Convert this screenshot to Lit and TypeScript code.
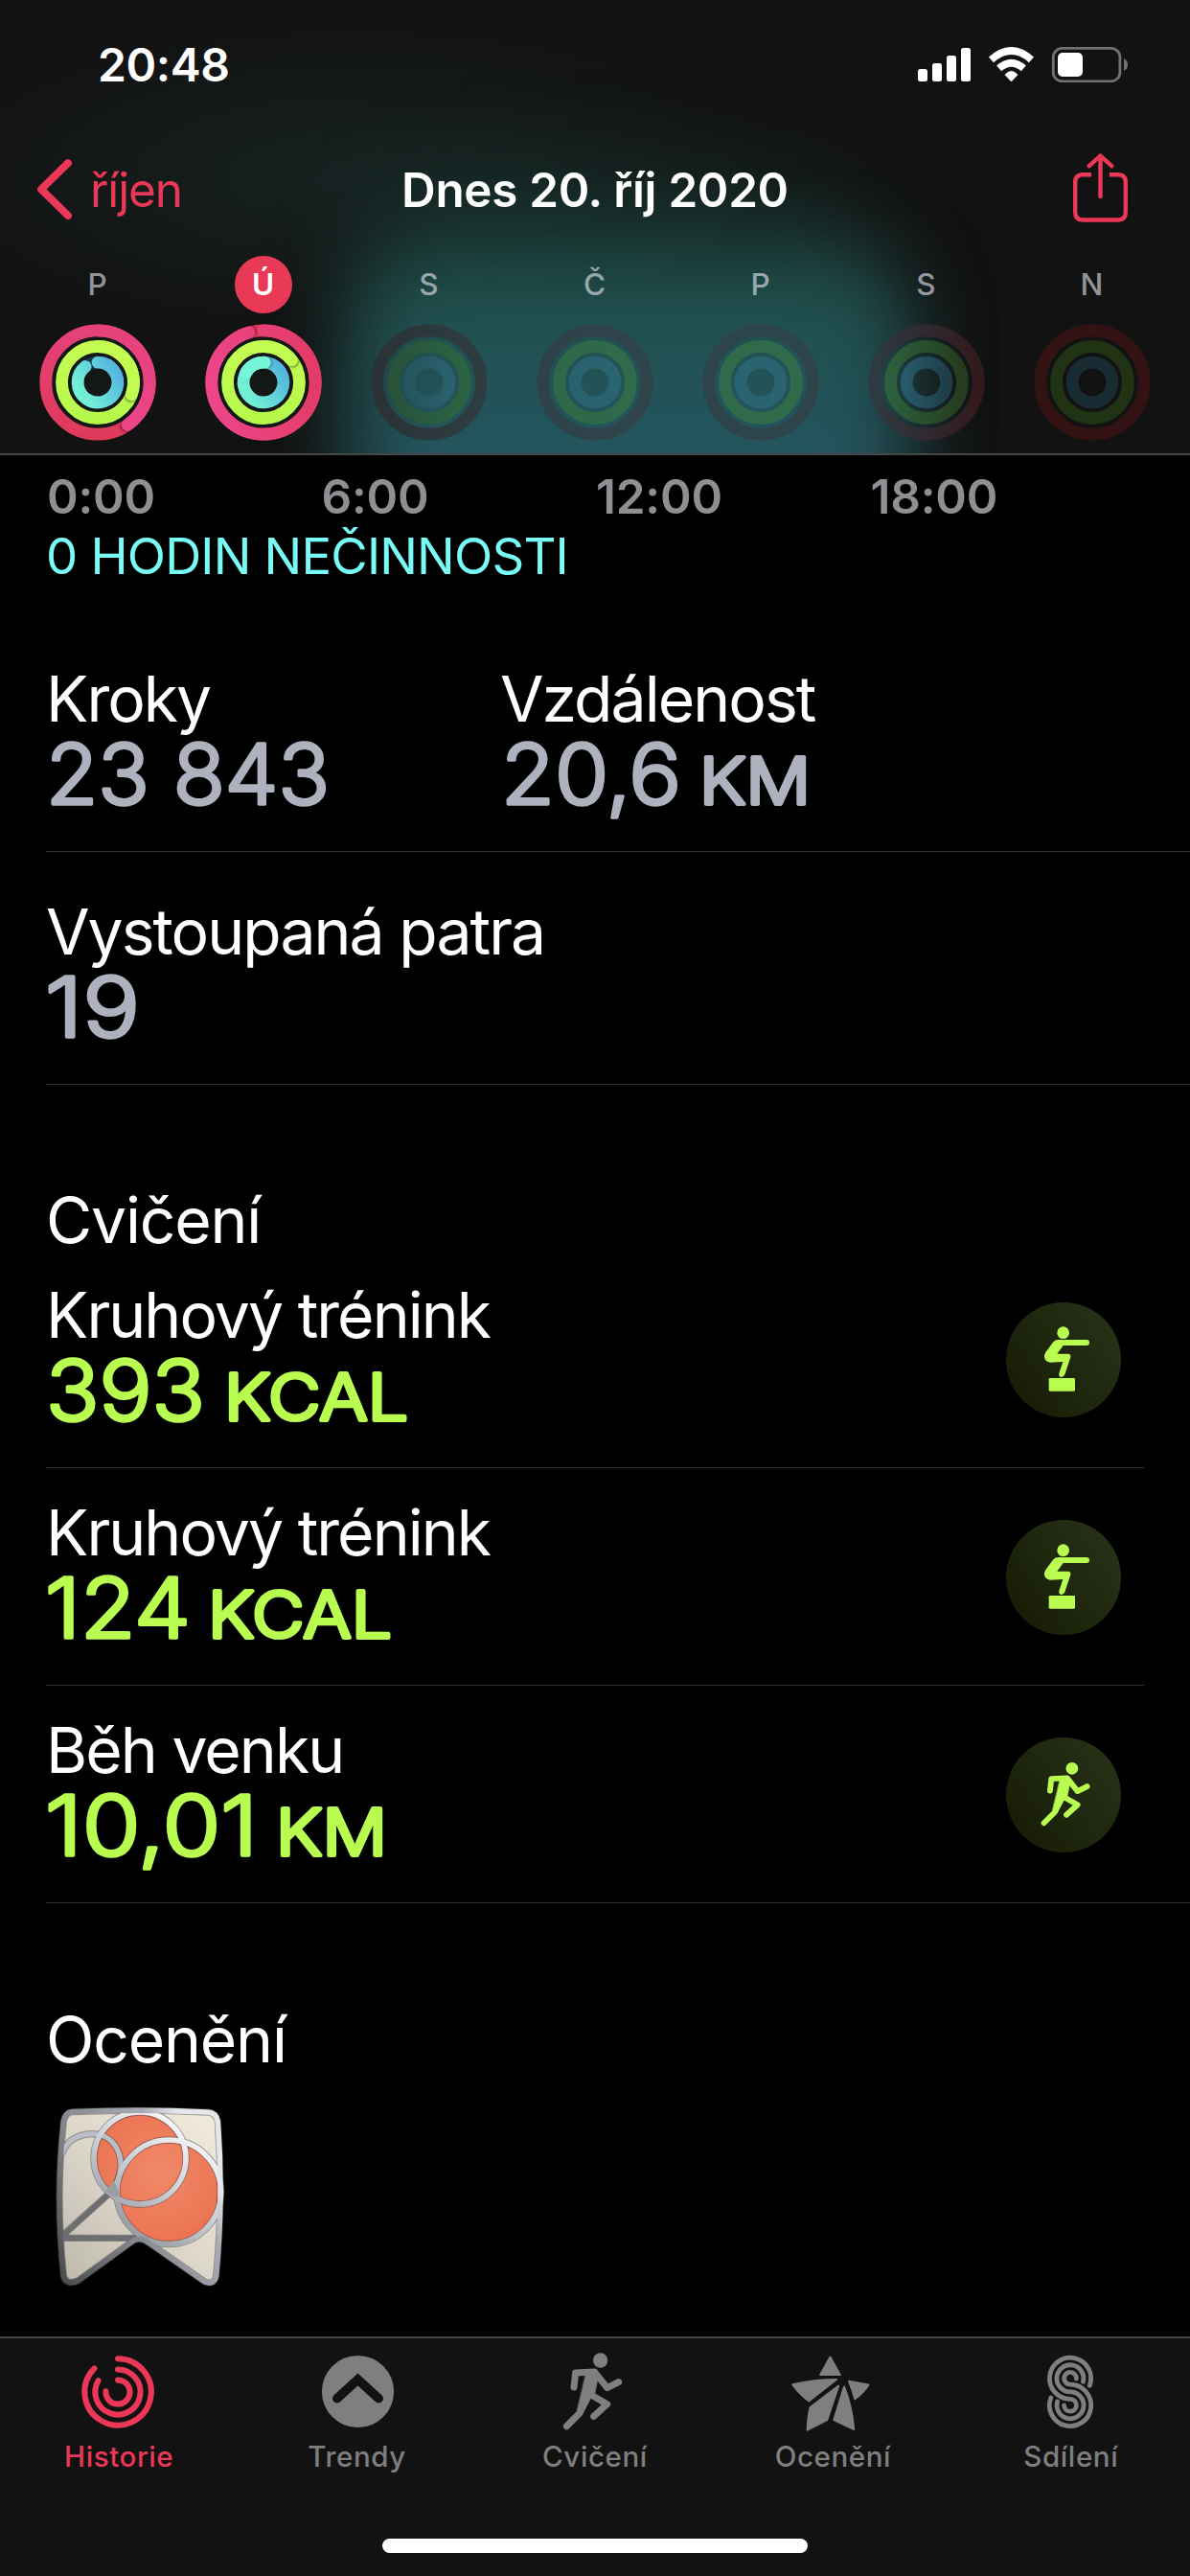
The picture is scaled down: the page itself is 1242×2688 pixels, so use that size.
import { LitElement, html, svg, css, nothing } from "lit";
import { customElement, property } from "lit/decorators.js";

type Part = { text: string; x: number; length: number; unit?: boolean };
type Lap = { start: number; end: number };
type Day = {
  letter: string;
  selected?: boolean;
  laps?: { move: number; exercise: number; stand: number };
  tracks?: [string, string][];
};

const WEEK: Day[] = [
  { letter: "P", laps: { move: 145, exercise: 110, stand: 322 } },
  { letter: "Ú", selected: true, laps: { move: 344, exercise: 52, stand: 364 } },
  { letter: "S", tracks: [["#2a3336", "#2e3d42"], ["#28533a", "#2c6343"], ["#26555f", "#29616e"]] },
  { letter: "Č", tracks: [["#2e4349", "#2e444b"], ["#2e6849", "#2f6a4a"], ["#29626e", "#2a6470"]] },
  { letter: "P", tracks: [["#2e444b", "#2e444b"], ["#2f6a4b", "#2f6a4b"], ["#2a6470", "#2a6470"]] },
  { letter: "S", tracks: [["#2d3a41", "#321a1d"], ["#2c5f3e", "#243c1d"], ["#27596a", "#1e3e48"]] },
  { letter: "N", tracks: [["#331214", "#331214"], ["#203314", "#203314"], ["#192c34", "#192c34"]] },
];

const RADII = { move: 54.2, exercise: 37.5, stand: 20.9 };

function point(r: number, deg: number): [number, number] {
  const a = (deg * Math.PI) / 180;
  return [61 + r * Math.sin(a), 61 - r * Math.cos(a)];
}

function arc(r: number, { start, end }: Lap): string {
  const [x0, y0] = point(r, start);
  const [x1, y1] = point(r, end);
  return `M${x0} ${y0}A${r} ${r} 0 ${end - start > 180 ? 1 : 0} 1 ${x1} ${y1}`;
}

@customElement("activity-rings")
class ActivityRings extends LitElement {
  @property({ attribute: false }) day!: Day;

  static styles = css`
    :host { display: block; width: 122px; height: 122px; }
    svg { display: block; overflow: visible; }
    .arc { fill: none; stroke-width: 12.8; stroke-linecap: round; }
    .shade { fill: #000; opacity: 0.55; filter: blur(1.4px); }
  `;

  private cap(r: number, deg: number) {
    const [x, y] = point(r, deg + 90 / r);
    return svg`<circle class="shade" cx=${x} cy=${y} r="6"></circle>`;
  }

  render() {
    const { laps, tracks } = this.day;
    if (tracks) {
      const radii = [RADII.move, RADII.exercise, RADII.stand];
      return html`<svg width="122" height="122" viewBox="0 0 122 122">
        ${tracks.map(
          ([a, b], i) => svg`<linearGradient id="t${i}"><stop offset="0" stop-color=${a}></stop><stop offset="1" stop-color=${b}></stop></linearGradient>
          <circle class="arc" cx="61" cy="61" r=${radii[i]} stroke="url(#t${i})"></circle>`
        )}
      </svg>`;
    }
    if (!laps) return nothing;
    const longMove = laps.move > 180;
    return html`<svg width="122" height="122" viewBox="0 0 122 122">
      <defs>
        <linearGradient id="base" x1="0" y1="1" x2="0" y2="0">
          <stop offset="0" stop-color="#e03a5b"></stop><stop offset="1" stop-color="#e5417a"></stop>
        </linearGradient>
        <linearGradient id="move" gradientUnits="userSpaceOnUse" x1=${longMove ? 122 : 61} y1="0" x2=${longMove ? 0 : 85} y2=${longMove ? 20 : 122}>
          <stop offset="0" stop-color=${longMove ? "#e13a63" : "#e54179"}></stop><stop offset="1" stop-color="#ec4589"></stop>
        </linearGradient>
        <linearGradient id="exercise" x1="0" y1="1" x2="0" y2="0">
          <stop offset="0" stop-color="#b6f94b"></stop><stop offset="1" stop-color="#c5fd52"></stop>
        </linearGradient>
        <linearGradient id="stand" gradientUnits="userSpaceOnUse" x1="76" y1="38" x2="38" y2="62">
          <stop offset="0" stop-color="#54b5df"></stop><stop offset="1" stop-color="#72f0d6"></stop>
        </linearGradient>
      </defs>
      <circle cx="61" cy="61" r="60" fill="#131716"></circle>
      <circle class="arc" cx="61" cy="61" r=${RADII.move} stroke=${longMove ? "#e13a5f" : "url(#base)"}></circle>
      ${this.cap(RADII.move, laps.move)}
      <path class="arc" d=${arc(RADII.move, { start: 0, end: laps.move })} stroke="url(#move)"></path>
      <circle class="arc" cx="61" cy="61" r=${RADII.exercise} stroke="url(#exercise)"></circle>
      ${this.cap(RADII.exercise, laps.exercise)}
      <path class="arc" d=${arc(RADII.exercise, { start: 0, end: laps.exercise })} stroke="#c3fc51"></path>
      <circle class="arc" cx="61" cy="61" r=${RADII.stand} stroke="#173641"></circle>
      <path class="arc" d=${arc(RADII.stand, { start: 0, end: Math.min(laps.stand, 350) })} stroke="url(#stand)"></path>
      ${laps.stand > 360
        ? svg`${this.cap(RADII.stand, laps.stand - 2)}<path class="arc" d=${arc(RADII.stand, { start: 300, end: laps.stand })} stroke="#76f6d8"></path>`
        : nothing}
    </svg>`;
  }
}

/** Large figure with a smaller unit, drawn with rounded stroke ends. */
@customElement("rounded-value")
class RoundedValue extends LitElement {
  @property({ attribute: false }) parts: Part[] = [];

  static styles = css`
    :host { display: block; height: 90px; }
    svg { display: block; overflow: visible; }
    text {
      font-family: Inter, "Liberation Sans", sans-serif;
      font-size: 86px;
      font-weight: 300;
      fill: currentColor;
      stroke: currentColor;
      stroke-width: 3.4px;
      stroke-linejoin: round;
    }
    .unit { font-size: 67px; stroke-width: 4.2px; }
  `;

  render() {
    return html`<svg width="440" height="90" viewBox="0 0 440 90">
      ${this.parts.map(
        (p) => svg`<text class=${p.unit ? "unit" : ""} x=${p.x} y="70" textLength=${p.length} lengthAdjust="spacingAndGlyphs">${p.text}</text>`
      )}
    </svg>`;
  }
}

const RUNNER = svg`<g fill="currentColor" stroke="currentColor" stroke-linecap="round" stroke-linejoin="round">
  <circle cx="155" cy="54" r="23" stroke="none"></circle>
  <path d="M72 138L77 93L136 90M138 92L176 140L212 122M122 160L176 191L134 229M118 165L90 219L49 260" fill="none" stroke-width="21"></path>
  <path d="M109 100L149 100L137 160L117 178L98 223L82 212Z" stroke-width="2"></path>
</g>`;

const ICONS: Record<string, unknown> = {
  rings: html`<svg width="90" height="90" viewBox="0 0 90 90">
    <g fill="none" stroke="currentColor" stroke-width="6" stroke-linecap="round">
      <path d="M44 11.2A34.7 34.7 0 1 1 19.5 21.4"></path>
      <path d="M44 22.4A23.6 23.6 0 1 1 23.5 34.2"></path>
      <path d="M44 33.4A12.6 12.6 0 1 1 31.4 45.2"></path>
    </g>
  </svg>`,
  trends: html`<svg width="90" height="90" viewBox="0 0 90 90">
    <circle cx="45.5" cy="45.5" r="37.6" fill="currentColor"></circle>
    <path d="M23.8 52.8L45.5 33L67.2 52.8" fill="none" stroke="#121212" stroke-width="9.6" stroke-linecap="round"></path>
  </svg>`,
  runner: html`<svg width="90" height="90" viewBox="3 15 270 270" overflow="visible">${RUNNER}</svg>`,
  star: html`<svg width="90" height="90" viewBox="0 0 90 90">
    <g fill="currentColor" stroke="currentColor" stroke-width="2" stroke-linejoin="round">
      <path d="M42.5 9.5L52.7 28H32.2Z"></path>
      <path d="M3.2 38.2Q26 33 49 33L20.2 55.4Q10 48 3.2 38.2Z"></path>
      <path d="M51.2 39.5L39.4 75L18.6 85.6Q19 72 21.6 62Z"></path>
      <path d="M57 40.5Q65 60 67.2 85L46.3 75Z"></path>
      <path d="M62 34.8L82.4 38.6Q77 47 68.2 53.2Q66 44 62 34.8Z"></path>
    </g>
  </svg>`,
  sharing: html`<svg width="90" height="90" viewBox="0 0 90 90">
    <g fill="none" stroke="currentColor" stroke-width="4.8" stroke-linecap="round">
      <path d="M64.3 39.3A21.6 21.6 0 1 0 44 53.4A6.4 6.4 0 1 1 37.6 60"></path>
      <path d="M57.5 35.2A14 14 0 1 0 44 45.8A14 14 0 1 1 30.6 56"></path>
      <path d="M50.4 32A6.4 6.4 0 1 0 44 38.2A21.7 21.7 0 1 1 23.8 52"></path>
    </g>
  </svg>`,
  circuit: html`<svg width="120" height="120" viewBox="0 0 360 360">
    <g fill="currentColor">
      <circle cx="179" cy="95" r="19"></circle>
      <path d="M164 117H252a9 9 0 0 1 0 18H179L160 161H194Q204 162 202 172L184 226Q180 235 172 234Q164 231 166 222L178 186L138 188Q118 186 120 166L124 156L148 124Q154 117 164 117Z"></path>
      <rect x="134" y="237" width="82" height="41" rx="4"></rect>
    </g>
  </svg>`,
  run: html`<svg width="120" height="120" viewBox="-94 -63 434 434">${RUNNER}</svg>`,
};

const HOURS = ["0:00", "6:00", "12:00", "18:00"];

const WORKOUTS: { name: string; icon: string; parts: Part[] }[] = [
  {
    name: "Kruhový trénink",
    icon: "circuit",
    parts: [
      { text: "393", x: 0, length: 166 },
      { text: "KCAL", x: 186, length: 192, unit: true },
    ],
  },
  {
    name: "Kruhový trénink",
    icon: "circuit",
    parts: [
      { text: "124", x: -1, length: 152 },
      { text: "KCAL", x: 169, length: 192, unit: true },
    ],
  },
  {
    name: "Běh venku",
    icon: "run",
    parts: [
      { text: "10,01", x: -1, length: 222 },
      { text: "KM", x: 240, length: 116, unit: true },
    ],
  },
];

const TABS = [
  { label: "Historie", icon: "rings", active: true },
  { label: "Trendy", icon: "trends" },
  { label: "Cvičení", icon: "runner" },
  { label: "Ocenění", icon: "star" },
  { label: "Sdílení", icon: "sharing" },
];

@customElement("app-root")
class AppRoot extends LitElement {
  static styles = css`
    :host {
      display: flex;
      flex-direction: column;
      width: 1242px;
      height: 2688px;
      overflow: hidden;
      background: #000;
      color: #fff;
      font-family: Inter, "Liberation Sans", sans-serif;
    }
    svg { display: block; }
    .header {
      position: relative;
      height: 473px;
      flex: none;
      overflow: hidden;
      background: #121212;
      border-bottom: 2px solid #474747;
    }
    .glow {
      position: absolute;
      left: 372px;
      top: 272px;
      width: 572px;
      height: 420px;
      border-radius: 70px;
      background: linear-gradient(#20504a, #24545e 45%);
      filter: blur(42px);
    }
    .glow-wide {
      position: absolute;
      left: 370px;
      top: 190px;
      width: 560px;
      height: 400px;
      border-radius: 140px;
      background: rgba(26, 76, 68, 0.45);
      filter: blur(50px);
    }
    .haze {
      position: absolute;
      left: -80px;
      top: 20px;
      width: 900px;
      height: 330px;
      background: radial-gradient(closest-side, rgba(30, 60, 56, 0.4), transparent);
    }
    .bar { position: relative; }
    .status {
      height: 135px;
      display: flex;
      align-items: center;
      justify-content: space-between;
      padding: 0 65px 0 102px;
    }
    .clock { font-size: 48px; font-weight: 600; letter-spacing: -0.4px; }
    .indicators { display: flex; align-items: center; }
    .nav {
      height: 126px;
      display: grid;
      grid-template-columns: 1fr auto 1fr;
      align-items: center;
      padding: 0 63px 0 36px;
    }
    .back { display: flex; align-items: center; gap: 17px; color: #ec3858; font-size: 49.5px; letter-spacing: -1.1px; }
    .title { font-size: 49.4px; font-weight: 600; letter-spacing: -0.3px; margin-left: 27px; }
    .share { justify-self: end; color: #ec3858; }
    .week { display: flex; padding: 6px 0 0 15px; }
    .day { width: 173px; display: flex; flex-direction: column; align-items: center; gap: 11px; }
    .letter {
      width: 60px;
      height: 60px;
      border-radius: 50%;
      line-height: 59px;
      text-align: center;
      font-size: 31.5px;
      font-weight: 500;
      color: rgba(235, 235, 245, 0.6);
    }
    .letter.selected { background: #e83a56; color: #fff; font-weight: 600; }
    .content { flex: 1; min-height: 0; overflow: hidden; padding-left: 48px; }
    .hours {
      display: grid;
      grid-template-columns: repeat(4, 286.5px);
      padding-left: 1px;
      font-size: 49.5px;
      line-height: 86px;
      font-weight: 600;
      letter-spacing: -0.2px;
      color: #8e8e93;
    }
    .idle { font-size: 52.7px; line-height: 38px; color: #78fcf6; letter-spacing: -0.83px; white-space: nowrap; }
    .stats { margin-top: 47px; }
    .stat-row { display: grid; grid-template-columns: 474px 1fr; padding: 43px 0 29px; border-bottom: 1px solid #333; }
    .name { font-size: 66px; line-height: 80px; letter-spacing: -1.95px; white-space: nowrap; }
    .grey { color: #aeb2bf; }
    .lime { color: #b9fd50; }
    .section { font-size: 66px; line-height: 64px; letter-spacing: -1.2px; margin-top: 109px; }
    .section.awards { margin-top: 110px; }
    .workout {
      display: flex;
      justify-content: space-between;
      align-items: center;
      padding: 27px 24px 29px 0;
      margin-right: 48px;
      border-bottom: 1px solid #333;
    }
    .workout:last-child { margin-right: 0; padding-right: 72px; }
    .disc {
      width: 120px;
      height: 120px;
      margin-top: 4px;
      border-radius: 50%;
      background: linear-gradient(55deg, #161a03, #283419);
      color: #b9fd50;
    }
    .badge { margin: 36.7px 0 0 8.7px; }
    .tabbar {
      flex: none;
      height: 248px;
      display: flex;
      flex-direction: column;
      justify-content: space-between;
      align-items: center;
      background: #121212;
      border-top: 2px solid #474747;
    }
    .tabs { display: grid; grid-template-columns: repeat(5, 1fr); width: 100%; padding-top: 10px; }
    .tab {
      display: flex;
      flex-direction: column;
      align-items: center;
      gap: 5px;
      font-size: 29.5px;
      line-height: 36px;
      font-weight: 500;
      letter-spacing: 0.6px;
      color: #7f7f7f;
    }
    .tab.active { color: #ec3858; }
    .home { width: 444px; height: 15px; border-radius: 8px; background: #fff; margin-bottom: 24px; }
  `;

  private renderHeader() {
    return html`<header class="header">
      <div class="haze"></div>
      <div class="glow-wide"></div>
      <div class="glow"></div>
      <div class="bar status">
        <span class="clock">20:48</span>
        <div class="indicators">
          <svg width="219" height="37" viewBox="958 49 219 37">
            <g fill="#fff">
              <rect x="958" y="72" width="10" height="13" rx="2.5"></rect>
              <rect x="973" y="66" width="10" height="19" rx="2.5"></rect>
              <rect x="988" y="58" width="10" height="27" rx="2.5"></rect>
              <rect x="1003" y="50" width="10" height="35" rx="2.5"></rect>
              <path d="M1055.5 85L1048.8 78Q1055.5 70.6 1062.2 78Z" stroke="#fff" stroke-width=".6"></path>
            </g>
            <g fill="none" stroke="#fff" stroke-width="7.6">
              <path d="M1034.5 62.3Q1055.5 43.6 1076.5 62.3"></path>
              <path d="M1042.7 71.4Q1055.5 60.2 1068.3 71.4"></path>
            </g>
            <rect x="1099.3" y="50.3" width="69.6" height="34.6" rx="9.5" fill="none" stroke="#717171" stroke-width="2.8"></rect>
            <rect x="1104" y="55" width="26" height="25" rx="5" fill="#fff"></rect>
            <path d="M1173 61Q1177 63 1177 67.5T1173 74Z" fill="#717171"></path>
          </svg>
        </div>
      </div>
      <div class="bar nav">
        <div class="back">
          <svg width="41" height="64" viewBox="0 0 41 64">
            <path d="M35 4.2L7 31.5L35 59" fill="none" stroke="currentColor" stroke-width="8" stroke-linecap="round" stroke-linejoin="round"></path>
          </svg>
          <span>říjen</span>
        </div>
        <div class="title">Dnes 20. říj 2020</div>
        <svg class="share" width="60" height="76" viewBox="1118 160 60 76">
          <g fill="none" stroke="currentColor" stroke-width="4.4">
            <path d="M1138 182.2H1129Q1121.2 182.2 1121.2 190V221.5Q1121.2 229.5 1129 229.5H1166Q1173.8 229.5 1173.8 221.5V190Q1173.8 182.2 1166 182.2H1157"></path>
            <path d="M1147.5 205V162.5M1135.8 173.2L1147.5 162.5L1159.2 173.2" stroke-linecap="round" stroke-linejoin="round"></path>
          </g>
        </svg>
      </div>
      <div class="bar week">
        ${WEEK.map(
          (day) => html`<div class="day">
            <div class="letter ${day.selected ? "selected" : ""}">${day.letter}</div>
            <activity-rings .day=${day}></activity-rings>
          </div>`
        )}
      </div>
    </header>`;
  }

  private renderBadge() {
    return html`<svg class="badge" width="180" height="190" viewBox="170 350 540 570">
      <defs>
        <linearGradient id="bright" gradientUnits="userSpaceOnUse" x1="330" y1="740" x2="560" y2="420">
          <stop offset="0" stop-color="#8d9097"></stop>
          <stop offset=".5" stop-color="#c6cad2"></stop>
          <stop offset="1" stop-color="#f4f5f9"></stop>
        </linearGradient>
        <linearGradient id="edge" gradientUnits="userSpaceOnUse" x1="200" y1="900" x2="690" y2="620">
          <stop offset="0" stop-color="#4a4c50"></stop>
          <stop offset=".45" stop-color="#85888e"></stop>
          <stop offset=".85" stop-color="#a9acb4"></stop>
          <stop offset="1" stop-color="#e4e6ea"></stop>
        </linearGradient>
        <linearGradient id="cream" x1="0" y1="1" x2="1" y2="0">
          <stop offset="0" stop-color="#bdb8ac"></stop>
          <stop offset=".5" stop-color="#ded8cb"></stop>
          <stop offset="1" stop-color="#f2ecdd"></stop>
        </linearGradient>
        <radialGradient id="coral" gradientUnits="userSpaceOnUse" cx="500" cy="560" r="230">
          <stop offset="0" stop-color="#f08a68"></stop>
          <stop offset="1" stop-color="#ec7252"></stop>
        </radialGradient>
      </defs>
      <path d="M225 372Q436 362 651 373Q676 375 679 400Q697 640 674 884Q668 912 640 902L462 776Q436 756 413 774L243 897Q208 912 200 884Q174 640 200 400Q203 374 225 372Z" fill="url(#cream)"></path>
      <circle cx="437" cy="515" r="144" fill="url(#coral)"></circle>
      <circle cx="528" cy="621" r="163" fill="url(#coral)"></circle>
      <g fill="none" stroke="#45413f" stroke-opacity=".5" stroke-width="22">
        <circle cx="437" cy="515" r="144"></circle>
        <circle cx="528" cy="621" r="163"></circle>
        <path d="M193 502Q214 441 288 439C350 440 380 490 377 545Q372 590 345 622L200 752M196 765H425"></path>
        <path d="M225 370Q436 360 651 371Q676 373 681 400Q699 640 676 884Q668 914 640 902L462 778Q436 760 413 776L243 899Q206 914 198 884Q172 640 198 400Q203 372 225 370Z"></path>
      </g>
      <path d="M193 765H430M345 622L198 756" fill="none" stroke="#6c6e72" stroke-width="17"></path>
      <path d="M193 502Q214 441 288 439C350 440 380 490 377 545Q372 590 345 622" fill="none" stroke="#b9bdc5" stroke-width="16"></path>
      <circle cx="437" cy="515" r="144" fill="none" stroke="url(#bright)" stroke-width="17"></circle>
      <circle cx="528" cy="621" r="163" fill="none" stroke="url(#bright)" stroke-width="17"></circle>
      <path d="M356 585L376 634L350 636L330 618Z" fill="#9a9da3"></path>
      <path d="M225 370Q436 360 651 371Q676 373 681 400Q699 640 676 884Q668 914 640 902L462 778Q436 760 413 776L243 899Q206 914 198 884Q172 640 198 400Q203 372 225 370Z" fill="none" stroke="url(#edge)" stroke-width="17"></path>
    </svg>`;
  }

  render() {
    return html`
      ${this.renderHeader()}
      <main class="content">
        <div class="hours">${HOURS.map((h) => html`<span>${h}</span>`)}</div>
        <div class="idle">0 HODIN NEČINNOSTI</div>
        <section class="stats">
          <div class="stat-row">
            <div>
              <div class="name">Kroky</div>
              <rounded-value class="grey" .parts=${[{ text: "23\u00a0843", x: 0, length: 296 }]}></rounded-value>
            </div>
            <div>
              <div class="name">Vzdálenost</div>
              <rounded-value
                class="grey"
                .parts=${[
                  { text: "20,6", x: 1, length: 188 },
                  { text: "KM", x: 208, length: 116, unit: true },
                ]}
              ></rounded-value>
            </div>
          </div>
          <div class="stat-row">
            <div>
              <div class="name">Vystoupaná patra</div>
              <rounded-value class="grey" .parts=${[{ text: "19", x: -1, length: 99 }]}></rounded-value>
            </div>
          </div>
        </section>
        <div class="section">Cvičení</div>
        <section>
          ${WORKOUTS.map(
            (w) => html`<div class="workout">
              <div>
                <div class="name">${w.name}</div>
                <rounded-value class="lime" .parts=${w.parts}></rounded-value>
              </div>
              <div class="disc">${ICONS[w.icon]}</div>
            </div>`
          )}
        </section>
        <div class="section awards">Ocenění</div>
        ${this.renderBadge()}
      </main>
      <footer class="tabbar">
        <nav class="tabs">
          ${TABS.map(
            (t) => html`<div class="tab ${t.active ? "active" : ""}">${ICONS[t.icon]}<span>${t.label}</span></div>`
          )}
        </nav>
        <div class="home"></div>
      </footer>
    `;
  }
}
